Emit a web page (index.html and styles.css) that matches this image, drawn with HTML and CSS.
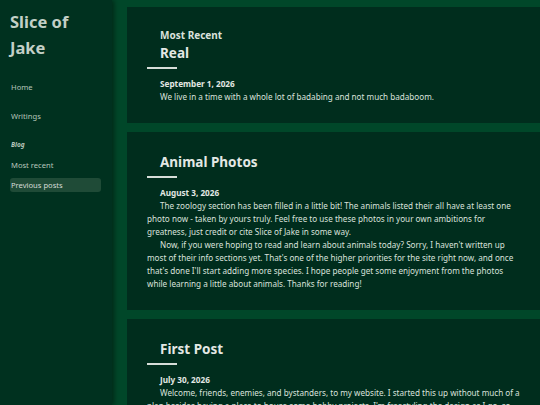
FILE: index.html
```html
<!DOCTYPE html>
<html lang="en">
<head>
<meta charset="utf-8">
<title>Slice of Jake</title>
<link rel="stylesheet" href="styles.css">
</head>
<body>
<div class="layout">
  <aside class="sidebar">
    <h1 class="site-title">Slice of Jake</h1>
    <nav class="nav">
      <a class="nav-link" href="#">Home</a>
      <a class="nav-link" href="#">Writings</a>
      <div class="nav-group">
        <span class="nav-heading">Blog</span>
        <div class="nav-sub">
          <a class="nav-link" href="#">Most recent</a>
          <a class="nav-link active" href="#">Previous posts</a>
        </div>
      </div>
    </nav>
  </aside>
  <main class="main">
    <article class="card">
      <h3 class="kicker">Most Recent</h3>
      <h2 class="post-title first">Real</h2>
      <hr class="rule">
      <p class="date">September 1, 2026</p>
      <p class="para">We live in a time with a whole lot of badabing and not much badaboom.</p>
    </article>
    <article class="card">
      <h2 class="post-title">Animal Photos</h2>
      <hr class="rule">
      <p class="date">August 3, 2026</p>
      <p class="para">The zoology section has been filled in a little bit! The animals listed their all have at least one photo now - taken by yours truly. Feel free to use these photos in your own ambitions for greatness, just credit or cite Slice of Jake in some way.</p>
      <p class="para">Now, if you were hoping to read and learn about animals today? Sorry, I haven't written up most of their info sections yet. That's one of the higher priorities for the site right now, and once that's done I'll start adding more species. I hope people get some enjoyment from the photos while learning a little about animals. Thanks for reading!</p>
    </article>
    <article class="card">
      <h2 class="post-title">First Post</h2>
      <hr class="rule">
      <p class="date">July 30, 2026</p>
      <p class="para">Welcome, friends, enemies, and bystanders, to my website. I started this up without much of a plan besides having a place to house some hobby projects. I'm freestyling the design as I go, so expect things to change around here every so often.</p>
    </article>
  </main>
</div>
</body>
</html>
```

FILE: styles.css
```css
* { box-sizing: border-box; }

html, body {
  margin: 0;
  padding: 0;
  height: 100%;
  overflow: hidden;
}

body {
  font-family: "Noto Sans", "Open Sans", sans-serif;
  background: #004729;
  color: #dae1dc;
}

.layout {
  display: flex;
  height: 405px;
}

.sidebar {
  width: 112px;
  flex: none;
  background: #00311f;
  box-shadow: 2px 0 5px rgba(0, 0, 0, 0.45);
  padding: 9px 11px 0 10px;
  position: relative;
  z-index: 1;
}

.site-title {
  margin: 0;
  font-size: 16.5px;
  line-height: 26px;
  font-weight: 700;
  color: #c3d0c7;
}

.nav {
  display: flex;
  flex-direction: column;
  gap: 15px;
  margin-top: 19px;
}

.nav-link {
  display: block;
  font-size: 7.6px;
  line-height: 14px;
  height: 14px;
  color: #b7c6bb;
  text-decoration: none;
  padding-left: 1px;
  border-radius: 3px;
}

.nav-link.active {
  background: #1f4b37;
  color: #d6ddd8;
}

.nav-group {
  display: flex;
  flex-direction: column;
  gap: 6px;
}

.nav-heading {
  font-size: 6.5px;
  line-height: 14px;
  font-style: italic;
  font-weight: 700;
  color: #b7c6bb;
  padding-left: 1px;
}

.nav-sub {
  display: flex;
  flex-direction: column;
  gap: 6px;
}

.main {
  flex: 1;
  min-width: 0;
  padding: 7px 0 0 15px;
  display: flex;
  flex-direction: column;
  gap: 9px;
}

.card {
  background: #002d1d;
  padding: 21px 20px 20px 20px;
  flex: none;
}

.kicker {
  margin: 0;
  padding-left: 13px;
  font-size: 10px;
  line-height: 14px;
  font-weight: 700;
  color: #dae1dc;
}

.post-title {
  margin: 0;
  padding-left: 13px;
  font-size: 13.5px;
  line-height: 18px;
  font-weight: 700;
  color: #e3e8e4;
}

.post-title.first {
  margin-top: 1.5px;
}

.rule {
  width: 30px;
  height: 2px;
  border: 0;
  margin: 5px 0 0 0;
  background: #d6ddd8;
}

.date {
  margin: 8px 0 0 0;
  text-indent: 13px;
  font-size: 8.2px;
  line-height: 13px;
  font-weight: 700;
  color: #e3e8e4;
}

.para {
  margin: 0;
  text-indent: 13px;
  font-size: 8.15px;
  line-height: 13px;
  color: #dae1dc;
}
```
